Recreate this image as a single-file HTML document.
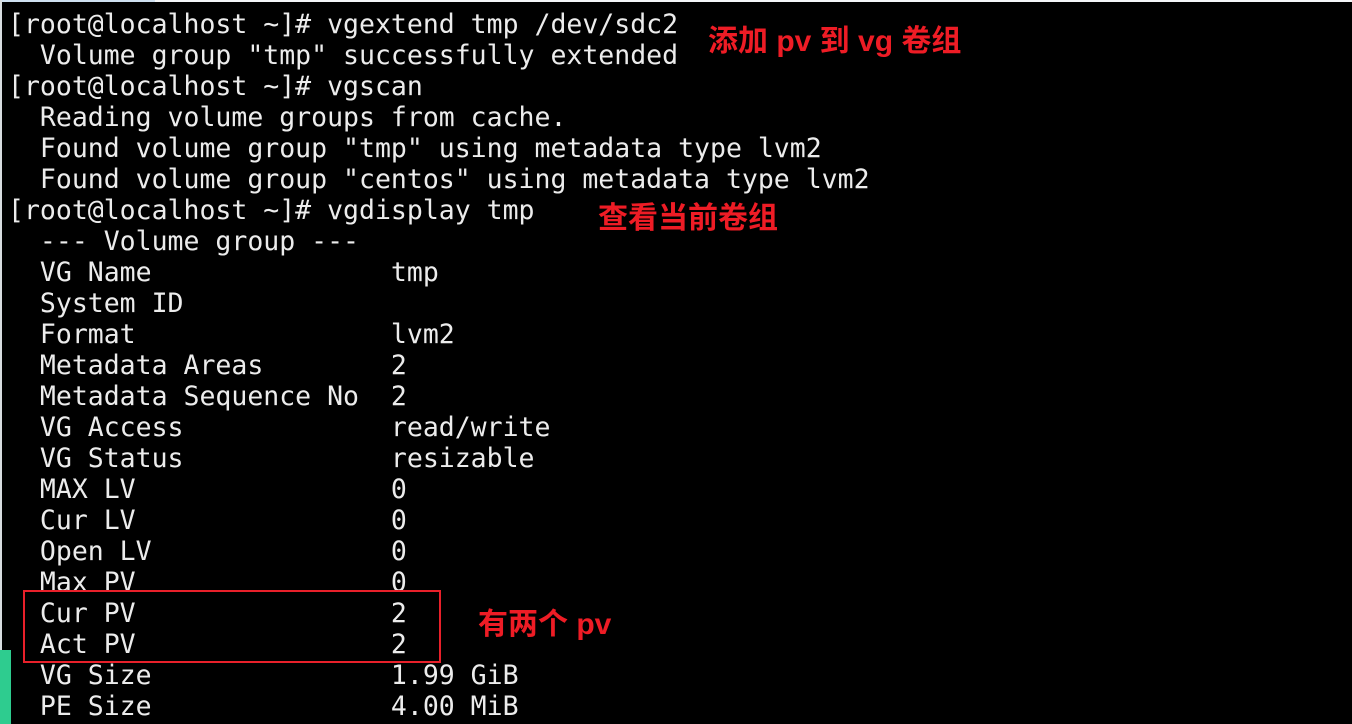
<!DOCTYPE html>
<html><head><meta charset="utf-8"><style>
html,body{margin:0;padding:0;width:1352px;height:724px;overflow:hidden;background:#000;}
.top{position:absolute;left:0;top:0;width:1352px;height:2px;background:#f4f6f8;}
.top2{position:absolute;left:0;top:0;width:155px;height:2px;background:#cfe0f0;}
.ls{position:absolute;left:0;top:0;width:2px;height:724px;background:#d8dde0;}
.gr{position:absolute;left:0;top:650px;width:11px;height:74px;background:#2ecc8f;}
pre{position:absolute;left:8px;top:9px;margin:0;font-family:"DejaVu Sans Mono","Liberation Mono",monospace;font-size:26.5px;line-height:31px;color:#ececec;}
.box{position:absolute;left:23px;top:590px;width:414px;height:69px;border:2px solid #e8202a;}
.a{position:absolute;color:#ee1c25;font-family:"Liberation Sans","Noto Sans CJK SC",sans-serif;font-weight:bold;font-size:30px;line-height:34px;white-space:nowrap;}
</style></head><body>
<div class="top"></div><div class="top2"></div><div class="ls"></div><div class="gr"></div>
<pre>[root@localhost ~]# vgextend tmp /dev/sdc2
  Volume group "tmp" successfully extended
[root@localhost ~]# vgscan
  Reading volume groups from cache.
  Found volume group "tmp" using metadata type lvm2
  Found volume group "centos" using metadata type lvm2
[root@localhost ~]# vgdisplay tmp
  --- Volume group ---
  VG Name               tmp
  System ID
  Format                lvm2
  Metadata Areas        2
  Metadata Sequence No  2
  VG Access             read/write
  VG Status             resizable
  MAX LV                0
  Cur LV                0
  Open LV               0
  Max PV                0
  Cur PV                2
  Act PV                2
  VG Size               1.99 GiB
  PE Size               4.00 MiB</pre>
<div class="box"></div>
<div class="a" style="left:708px;top:25px;">添加 pv 到 vg 卷组</div>
<div class="a" style="left:598px;top:202px;">查看当前卷组</div>
<div class="a" style="left:478px;top:608px;">有两个 pv</div>
</body></html>
